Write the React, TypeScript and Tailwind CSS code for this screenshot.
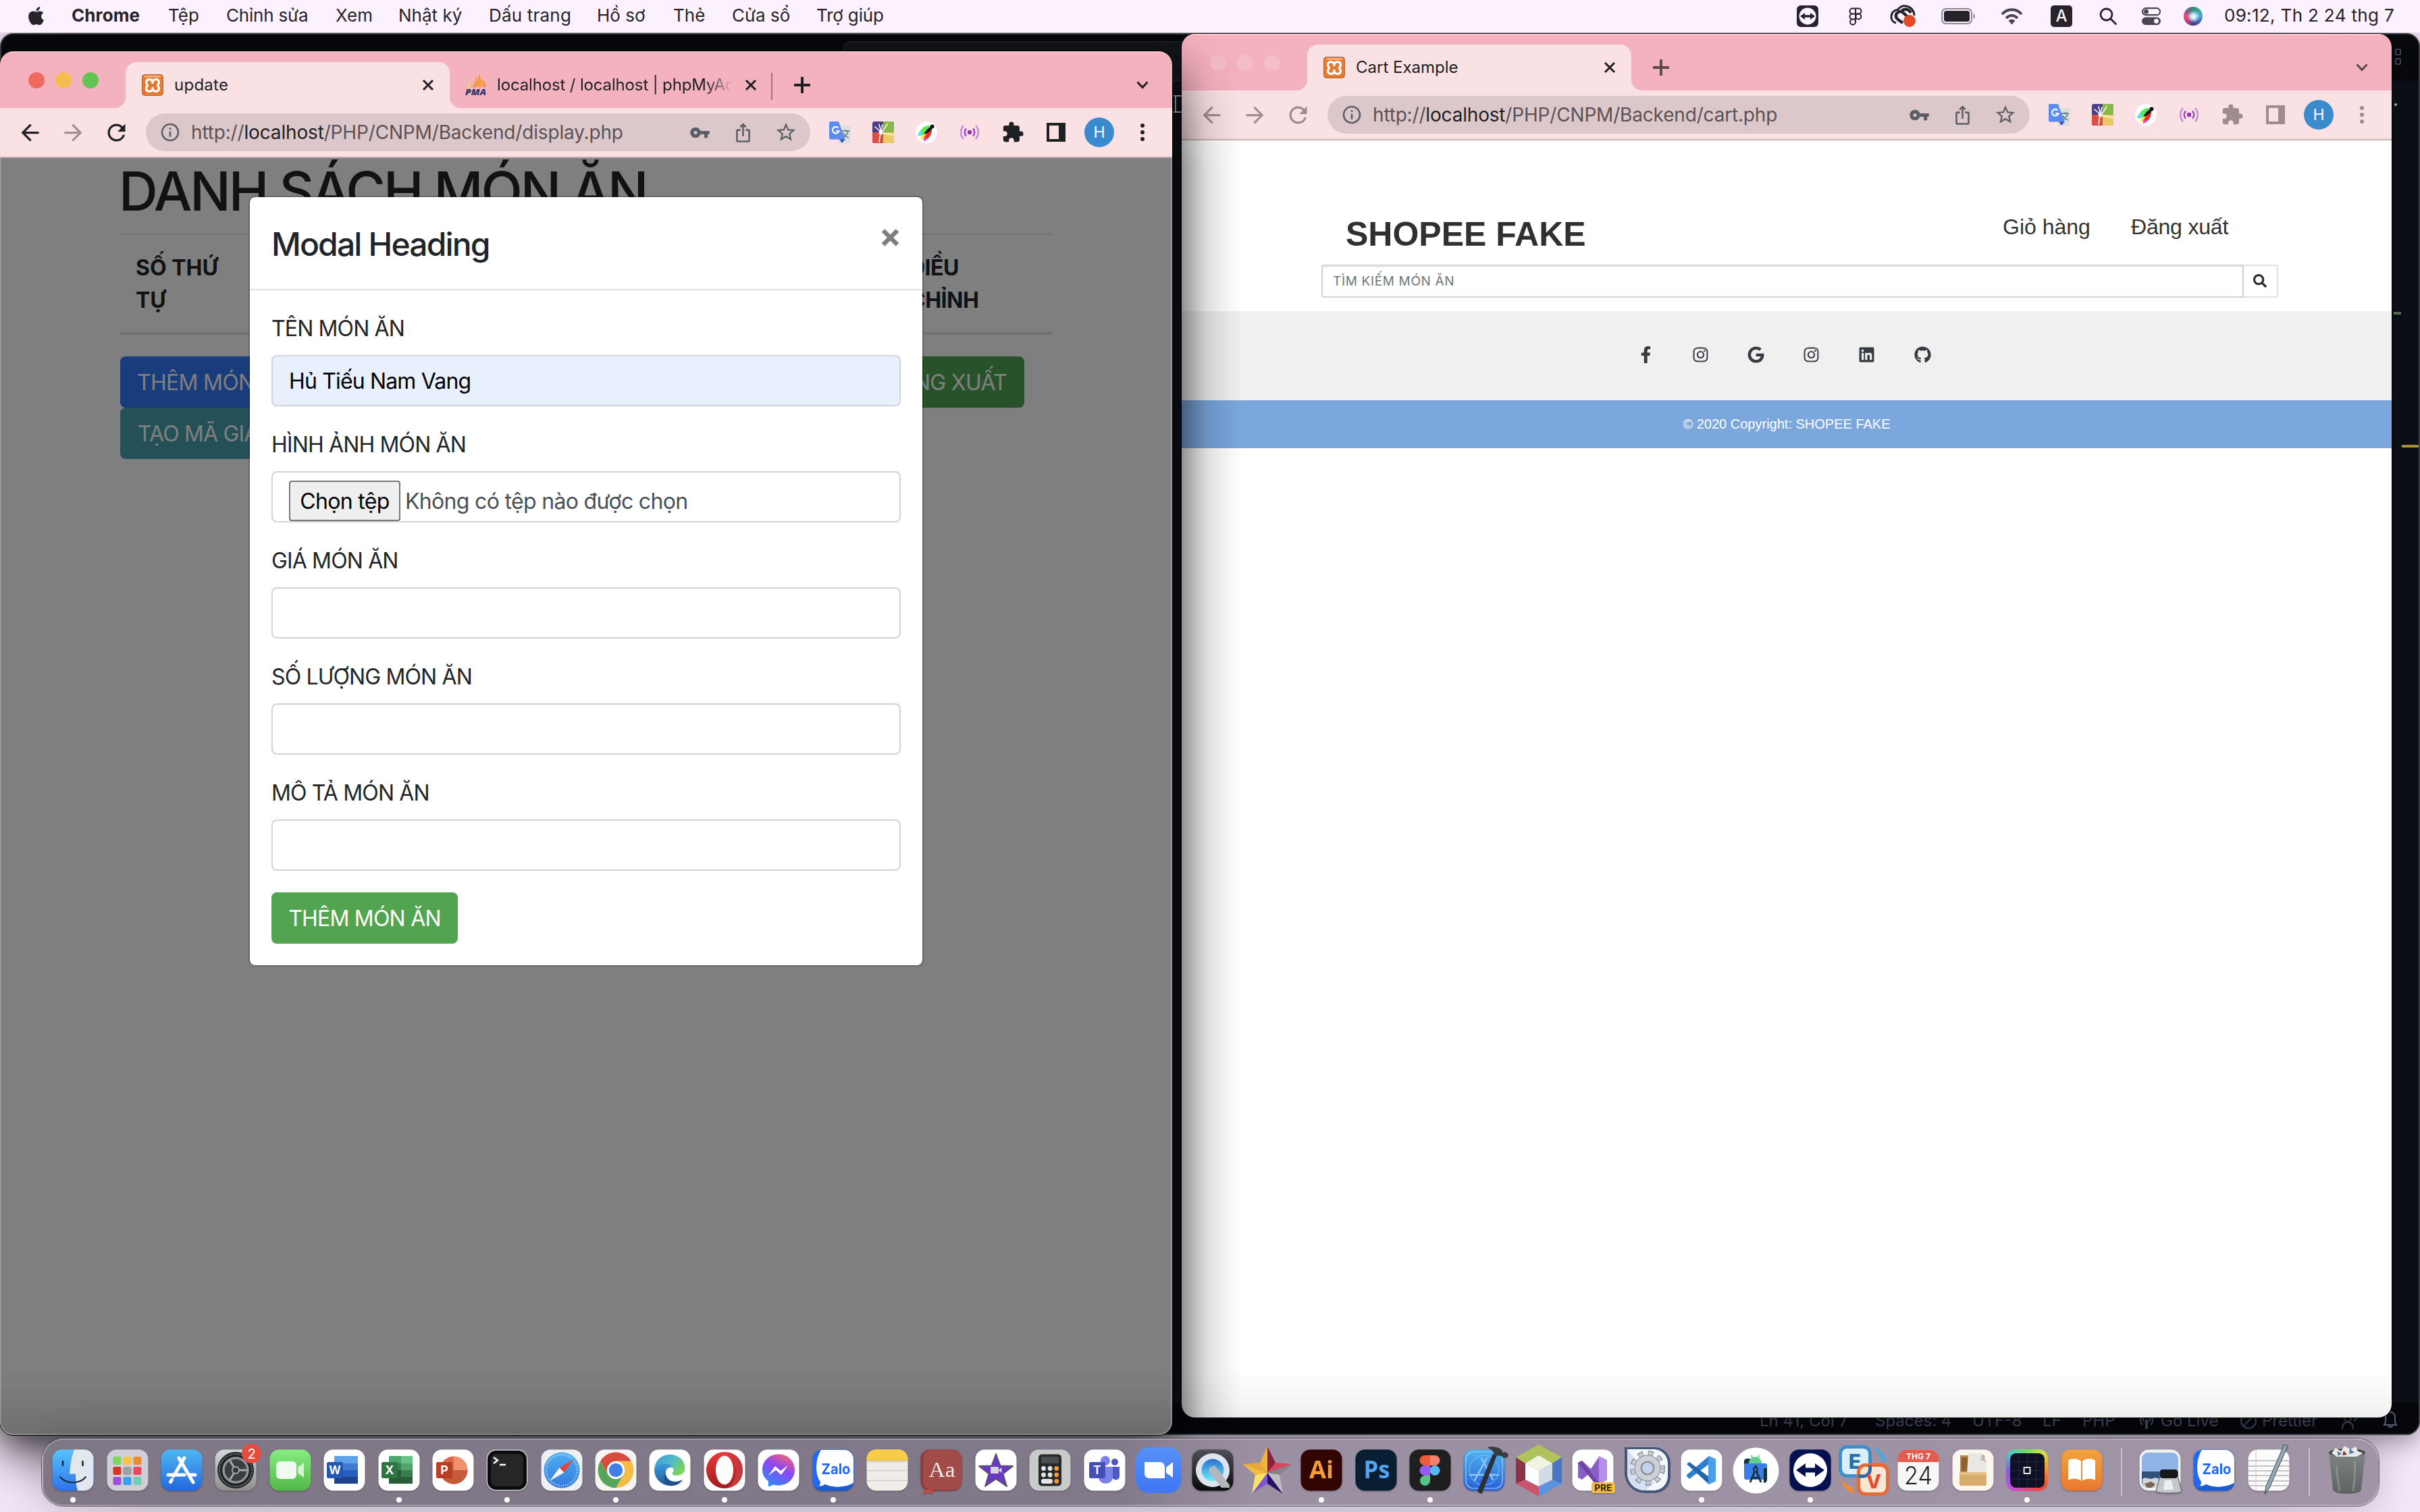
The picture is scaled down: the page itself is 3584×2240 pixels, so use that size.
import React from "react";
import {
  MdArrowBack,
  MdArrowForward,
  MdRefresh,
  MdVpnKey,
  MdIosShare,
  MdStarBorder,
  MdExtension,
  MdInfoOutline,
} from "react-icons/md";
import {
  FaApple,
  FaFacebookF,
  FaInstagram,
  FaGoogle,
  FaLinkedin,
  FaGithub,
  FaSearch,
} from "react-icons/fa";

type Kids = { children?: React.ReactNode };

/* ------------------------------------------------------------------ */
/* Menu bar                                                            */
/* ------------------------------------------------------------------ */

const menus = [
  { label: "Chrome", cls: "w-[143px] font-bold tracking-[0.1px]" },
  { label: "Tệp", cls: "w-[86px]" },
  { label: "Chỉnh sửa", cls: "w-[162px] tracking-[-0.2px]" },
  { label: "Xem", cls: "w-[93px]" },
  { label: "Nhật ký", cls: "w-[134px]" },
  { label: "Dấu trang", cls: "w-[160px] tracking-[0.2px]" },
  { label: "Hồ sơ", cls: "w-[113px]" },
  { label: "Thẻ", cls: "w-[87px]" },
  { label: "Cửa sổ", cls: "w-[125px]" },
  { label: "Trợ giúp", cls: "w-[120px] tracking-[-0.16px]" },
];

function MenuBar() {
  return (
    <header className="absolute inset-x-0 top-0 z-50 flex h-[48px] items-center bg-[#fbf1ff] text-[26px] text-[#262329]">
      <FaApple className="mb-[2px] ml-[38px] size-[31px]" />
      <nav className="ml-[37px] flex pb-[3px] leading-[44px]">
        {menus.map((m) => (
          <span key={m.label} className={`whitespace-nowrap ${m.cls}`}>
            {m.label}
          </span>
        ))}
      </nav>
      <div className="ml-auto flex items-center">
        <svg className="mr-[45px] size-[32px]" viewBox="0 0 32 32">
          <rect width="32" height="32" rx="6" fill="#262329" />
          <circle cx="16" cy="16" r="12.500" fill="#fbf1ff" />
          <path d="M5 16l7-5v3.200h8V11l7 5-7 5v-3.200h-8V21z" fill="#262329" />
        </svg>
        <svg className="mr-[39px] h-[27px] w-[20px]" viewBox="0 0 20 27" fill="none" stroke="#262329" strokeWidth="2">
          <path d="M10 1.500H5.500a4 4 0 0 0 0 8H10zM10 1.500h4.500a4 4 0 0 1 0 8H10zM10 9.500H5.500a4 4 0 0 0 0 8H10zM10 17.500H5.500a4 4 0 1 0 4.500 4z" />
          <circle cx="14.300" cy="13.500" r="4" />
        </svg>
        <svg className="mr-[36px] h-[34px] w-[42px]" viewBox="0 0 42 34">
          <path d="M11 27a9 9 0 0 1-7-9c0-6 4-10 10-11 3-4 7-6 12-5 7 1 12 7 12 14" fill="none" stroke="#262329" strokeWidth="3" />
          <path d="M21 27l-7-5c-4-3-4-8-1-10 3-3 7-2 10 1l5 5M19 10c4-5 11-4 14 2" fill="none" stroke="#262329" strokeWidth="4.500" />
          <circle cx="31" cy="24" r="9" fill="#de4b26" />
        </svg>
        <svg className="mr-[37px] h-[24px] w-[51px]" viewBox="0 0 51 24">
          <rect x="1" y="1" width="44" height="22" rx="6" fill="none" stroke="#8f8894" strokeWidth="2" />
          <rect x="4" y="4" width="38" height="16" rx="3.500" fill="#262329" />
          <path d="M47.500 8v8c3-1 3-7 0-8z" fill="#8f8894" />
        </svg>
        <svg className="mr-[41px] h-[25px] w-[33px]" viewBox="0 0 33 25" fill="none" stroke="#4a464d" strokeWidth="4">
          <path d="M2 9c8-9 21-9 29 0M8 15c5-5.500 12-5.500 17 0" />
          <path d="M16.500 24.500l-5-6c3-2.500 7-2.500 10 0z" fill="#4a464d" stroke="none" />
        </svg>
        <span className="mr-[40px] flex size-[32px] items-center justify-center rounded-[5px] bg-[#262329] text-[24px] font-medium text-[#fbf1ff]">
          A
        </span>
        <svg className="mr-[37px] size-[26px]" viewBox="0 0 26 26" fill="none" stroke="#262329" strokeWidth="2.800">
          <circle cx="10.500" cy="10.500" r="8.500" />
          <path d="M17 17l7.500 7.500" strokeLinecap="round" />
        </svg>
        <svg className="mr-[34px] h-[26px] w-[28px]" viewBox="0 0 28 26">
          <rect x="1" y="1.200" width="26" height="10" rx="5" fill="none" stroke="#4a464d" strokeWidth="2.200" />
          <circle cx="6.500" cy="6.200" r="3.400" fill="#4a464d" />
          <rect y="14.500" width="28" height="11.500" rx="5.700" fill="#4a464d" />
          <circle cx="21.500" cy="20.200" r="3.500" fill="#fbf1ff" />
        </svg>
        <span className="mr-[32px] size-[28px] rounded-full bg-[radial-gradient(circle_at_52%_52%,#ffffff_0%,#c5e4f5_18%,transparent_45%),conic-gradient(from_0deg,#2f8f77,#3ea79a,#4fa6dc,#3c62b8,#463a86,#b4407c,#e04f80,#7c5f8a,#2f8f77)]" />
        <span className="mr-[38px] whitespace-nowrap pb-[3px] leading-[44px] tracking-[0.34px]">
          09:12, Th 2 24 thg 7
        </span>
      </div>
    </header>
  );
}

/* ------------------------------------------------------------------ */
/* Browser chrome                                                      */
/* ------------------------------------------------------------------ */

function XamppIcon() {
  return (
    <svg className="size-[32px] shrink-0" viewBox="0 0 32 32">
      <rect x="0.500" y="0.500" width="31" height="31" rx="4" fill="#e57b33" stroke="#b3632c" />
      <rect x="4" y="2" width="24" height="2.500" rx="1" fill="#f3b78a" />
      <path
        d="M16 12.500c0-6.500-9.500-6.500-9.500-.5 0 2.500 1.800 3 1.800 4.500s-1.800 2-1.800 4.500c0 6 9.500 6 9.500-.5 0 6.500 9.500 6.500 9.500.5 0-2.500-1.800-3-1.800-4.500s1.800-2 1.800-4.500c0-6-9.500-6-9.500.5z"
        fill="none"
        stroke="#fff"
        strokeWidth="3.300"
        strokeLinejoin="round"
      />
    </svg>
  );
}

function PmaIcon() {
  return (
    <svg className="size-[32px] shrink-0" viewBox="0 0 32 32">
      <path d="M8 3C8 10 5 17 2 21l7-1zM16 2c0 7-3 14-6 18l9-1zM20 0c4 5 5 13 4 19l-7 0zM25 7c4 4 6 8 6 12l-5 0z" fill="#f29a3d" />
      <path d="M8 3c1 6 1 12 0 17l-6 1C5 17 8 10 8 3z" fill="#f7c98f" />
      <text
        x="0"
        y="31"
        fontSize="13"
        fontWeight="800"
        fontStyle="italic"
        fontFamily="Open Sans, sans-serif"
        fill="#2c3766"
        textLength="31"
        lengthAdjust="spacingAndGlyphs"
      >
        PMA
      </text>
    </svg>
  );
}

function CloseX() {
  return (
    <svg className="size-[18px]" viewBox="0 0 18 18" stroke="#1f2023" strokeWidth="3">
      <path d="M2 2l14 14M16 2L2 16" />
    </svg>
  );
}

function ActiveTab({ children }: Kids) {
  return (
    <div className="relative flex h-[68px] w-[480px] items-center rounded-t-[16px] bg-[#f9e1e4] pl-[24px] pr-[23px]">
      <span className="absolute -left-[16px] bottom-0 size-[16px] bg-[radial-gradient(circle_at_0_0,transparent_15.5px,#f9e1e4_16.5px)]" />
      <span className="absolute -right-[16px] bottom-0 size-[16px] bg-[radial-gradient(circle_at_100%_0,transparent_15.5px,#f9e1e4_16.5px)]" />
      {children}
    </div>
  );
}

function Slot({ children }: Kids) {
  return <span className="flex w-[64px] items-center justify-center">{children}</span>;
}

function TranslateIcon() {
  return (
    <svg className="size-[32px]" viewBox="0 0 32 32">
      <rect x="13" y="6" width="19" height="26" rx="2" fill="#dcdee0" />
      <path d="M19 14h11M24.500 12v2M28 14c-1 5-4 8-8 10M21 17c1 3 4 6 8 7" stroke="#6c8790" strokeWidth="1.800" fill="none" />
      <path d="M15 26l4 6 5-6z" fill="#3b4fb0" />
      <path d="M2 0h12l9.500 26.500H2a2 2 0 0 1-2-2V2a2 2 0 0 1 2-2z" fill="#5b8def" />
      <path d="M13.500 9.500a4.800 4.800 0 1 0 1 4.500H10" fill="none" stroke="#fff" strokeWidth="2.200" />
    </svg>
  );
}

function SplashIcon() {
  return (
    <svg className="size-[32px]" viewBox="0 0 32 32">
      <rect width="32" height="32" rx="3" fill="#4a3f86" />
      <path d="M16 0h13a3 3 0 0 1 3 3v13H16z" fill="#86b84a" />
      <path d="M0 16h16v16H3a3 3 0 0 1-3-3z" fill="#dc4f45" />
      <path d="M16 16h16v13a3 3 0 0 1-3 3H16z" fill="#ecc866" />
      <path d="M13 16L4 8M13 16L10 4M13 16l2-11M14 16l8-12M13 17l18 3M12 17l-2 13" stroke="#fff" strokeWidth="1.600" strokeLinecap="round" />
      <circle cx="12.500" cy="16.500" r="3" fill="#fff" />
    </svg>
  );
}

function FeatherIcon() {
  return (
    <svg className="size-[32px]" viewBox="0 0 32 32">
      <circle cx="16" cy="16" r="16" fill="#fff" />
      <path d="M3 21c3-8 9-15 17-15l3 3C20 16 12 22 3 21z" fill="#56e858" />
      <path d="M3 21c1-3 3-6 5-8l3 6c-2 2-5 2-8 2z" fill="#4fe3e8" />
      <path d="M8 26c1-5 4-9 8-12l2 6c-2 4-6 7-10 6z" fill="#f1e33a" />
      <path d="M12 29c-1-6 6-14 12-18 1 7-4 15-12 18z" fill="#ee2f24" />
      <path d="M12 29c0-2 1-4 2-5l4 1c-1 2-3 3-6 4z" fill="#ef3fe0" />
      <path d="M12 19c3-6 7-10 12-12l1 3c-3 4-7 8-13 9z" fill="#111" />
      <circle cx="24.500" cy="7.500" r="3" fill="#111" />
    </svg>
  );
}

function SignalIcon() {
  return (
    <svg className="h-[24px] w-[28px]" viewBox="0 0 28 24" fill="none">
      <circle cx="14" cy="12" r="3.200" fill="#8d35b3" />
      <path d="M9 6.500c-3 3-3 8 0 11M19 6.500c3 3 3 8 0 11" stroke="#9a48be" strokeWidth="2.600" />
      <path d="M5 2c-5 5.500-5 14.500 0 20M23 2c5 5.500 5 14.500 0 20" stroke="#c48fd9" strokeWidth="2.600" />
    </svg>
  );
}

type BrowserProps = {
  inactive?: boolean;
  tabTitle: string;
  tabTitleCls: string;
  extraTab?: boolean;
  path: string;
  urlCls: string;
  frame: string;
  children?: React.ReactNode;
};

function BrowserWindow({ inactive, tabTitle, tabTitleCls, extraTab, path, urlCls, frame, children }: BrowserProps) {
  const ink = inactive ? "text-[#5b4a4e]" : "text-[#1f2023]";
  const tool = inactive ? "text-[#9f8c91]" : "text-[#1f2023]";
  return (
    <section className={`absolute flex flex-col overflow-hidden rounded-[20px] ${frame}`}>
      <div className="flex h-[84px] shrink-0 items-end border-t-2 border-[#f8c8d1] bg-[#f4b1be]">
        <div className="ml-[42px] flex h-full items-center gap-[16px]">
          <span className={`size-[24px] rounded-full ${inactive ? "bg-[#f5bdc8]" : "bg-[#ee6a5e]"}`} />
          <span className={`size-[24px] rounded-full ${inactive ? "bg-[#f5bdc8]" : "bg-[#f5bd4f]"}`} />
          <span className={`size-[24px] rounded-full ${inactive ? "bg-[#f5bdc8]" : "bg-[#61c554]"}`} />
        </div>
        <div className="ml-[40px]">
          <ActiveTab>
            <XamppIcon />
            <span className={`ml-[16px] flex-1 text-[24px] text-[#1f2023] ${tabTitleCls}`}>{tabTitle}</span>
            <CloseX />
          </ActiveTab>
        </div>
        {extraTab && (
          <div className="flex h-[68px] w-[476px] items-center pl-[23px] pr-[21px]">
            <PmaIcon />
            <span className="ml-[15px] w-[352px] overflow-hidden whitespace-nowrap text-[24px] tracking-[-0.15px] text-[#1f2023] [mask-image:linear-gradient(to_right,#000_88%,transparent_99%)]">
              localhost / localhost | phpMyAdmin
            </span>
            <span className="ml-auto flex">
              <CloseX />
            </span>
          </div>
        )}
        <div className="flex h-[68px] flex-1 items-center justify-between pr-[35px]">
          <div className="flex items-center">
            {extraTab ? <span className="mt-[3px] h-[40px] w-[2px] bg-[#a5707c]" /> : null}
            <svg className={`ml-[32px] size-[24px] ${ink}`} viewBox="0 0 24 24" stroke="currentColor" strokeWidth="4">
              <path d="M12 0v24M0 12h24" />
            </svg>
          </div>
          <svg className={`h-[12px] w-[18px] ${ink}`} viewBox="0 0 18 12" fill="none" stroke="currentColor" strokeWidth="3">
            <path d="M1.500 1.500L9 9.500l7.500-8" />
          </svg>
        </div>
      </div>
      <div className="flex h-[74px] shrink-0 items-center border-b-2 border-[#c9b3b8] bg-[#f9e1e4] px-[12px]">
        <div className={`flex ${tool}`}>
          <Slot>
            <MdArrowBack className="size-[39px]" />
          </Slot>
          <Slot>
            <MdArrowForward className="size-[39px] text-[#a08f93]" />
          </Slot>
          <Slot>
            <MdRefresh className="size-[39px]" />
          </Slot>
        </div>
        <div className="ml-[12px] flex h-[56px] flex-1 items-center rounded-full bg-[#dcc8ca] pl-[20px] pr-[4px] text-[#5b5f65]">
          <MdInfoOutline className="size-[32px]" />
          <span className={`ml-[15px] flex-1 whitespace-nowrap text-[28px] leading-[40px] text-[#5c5154] ${urlCls}`}>
            http://<span className="text-[#1f2023]">localhost</span>
            {path}
          </span>
          <Slot>
            <MdVpnKey className="size-[31px]" />
          </Slot>
          <Slot>
            <MdIosShare className="size-[31px]" />
          </Slot>
          <Slot>
            <MdStarBorder className="size-[34px]" />
          </Slot>
        </div>
        <div className={`ml-[12px] flex ${tool}`}>
          <Slot>
            <TranslateIcon />
          </Slot>
          <Slot>
            <SplashIcon />
          </Slot>
          <Slot>
            <FeatherIcon />
          </Slot>
          <Slot>
            <SignalIcon />
          </Slot>
          <Slot>
            <MdExtension className="size-[34px]" />
          </Slot>
          <Slot>
            <span className="size-[28px] border-4 border-r-[10px] border-current" />
          </Slot>
          <Slot>
            <span className="flex size-[44px] items-center justify-center rounded-full bg-[#3a8bcd] text-[23px] text-white">H</span>
          </Slot>
          <Slot>
            <span className="flex flex-col gap-[4px]">
              <i className="size-[6px] rounded-full bg-current" />
              <i className="size-[6px] rounded-full bg-current" />
              <i className="size-[6px] rounded-full bg-current" />
            </span>
          </Slot>
        </div>
      </div>
      {children}
    </section>
  );
}

/* ------------------------------------------------------------------ */
/* Admin page with the modal                                           */
/* ------------------------------------------------------------------ */

function Field({ label, children }: { label: string; children?: React.ReactNode }) {
  return (
    <div className="mb-[32px]">
      <div className="mb-[15px] pt-px text-[32px] leading-[48px] tracking-[-0.86px] text-[#212529]">{label}</div>
      {children ?? <div className="h-[76px] rounded-[8px] border-2 border-[#ced4da] bg-white" />}
    </div>
  );
}

function Modal() {
  return (
    <div className="absolute left-[368px] top-[56px] w-[1000px] rounded-[10px] border-2 border-black/20 bg-white bg-clip-padding">
      <div className="flex items-start justify-between border-b-2 border-[#dee2e6] p-[32px]">
        <h4 className="-mb-[2px] mt-[2px] text-[48px] font-medium leading-[72px] tracking-[-1.85px] text-[#212529]">
          Modal Heading
        </h4>
        <svg className="mr-[2px] mt-[15px] h-[26px] w-[27px]" viewBox="0 0 26 26" stroke="#7f7f7f" strokeWidth="6.500">
          <path d="M2.500 2.500l21 21M23.500 2.500l-21 21" />
        </svg>
      </div>
      <div className="p-[32px]">
        <Field label="TÊN MÓN ĂN">
          <div className="h-[76px] rounded-[8px] border-2 border-[#ced4da] bg-[#e8effd] px-[24px] text-[32px] leading-[74px] tracking-[-0.84px] text-black">
            Hủ Tiếu Nam Vang
          </div>
        </Field>
        <Field label="HÌNH ẢNH MÓN ĂN">
          <div className="flex h-[76px] items-end rounded-[8px] border-2 border-[#ced4da] px-[24px] text-[32px] tracking-[-0.68px]">
            <span className="flex h-[60px] w-[165px] items-center justify-center whitespace-nowrap rounded-[4px] border-2 border-[#767676] bg-[#efefef] pt-px text-black">
              Chọn tệp
            </span>
            <span className="ml-[7px] whitespace-nowrap leading-[59px] text-[#495057]">Không có tệp nào được chọn</span>
          </div>
        </Field>
        <Field label="GIÁ MÓN ĂN" />
        <Field label="SỐ LƯỢNG MÓN ĂN" />
        <Field label="MÔ TẢ MÓN ĂN" />
        <div className="flex h-[76px] w-[276px] items-center justify-center whitespace-nowrap rounded-[8px] bg-[#53a451] pt-[2px] text-[32px] tracking-[-0.8px] text-white">
          THÊM MÓN ĂN
        </div>
      </div>
    </div>
  );
}

function AdminPage() {
  return (
    <div className="relative flex-1 overflow-hidden bg-white">
      <div className="ml-[178px] w-[1380px] text-[#212529]">
        <h1 className="-ml-[2px] mb-[16px] whitespace-nowrap pt-[2px] text-[80px] font-medium leading-[94px] tracking-[-3.1px]">
          DANH SÁCH MÓN ĂN
        </h1>
        <div className="mb-[32px] flex justify-between border-b-4 border-t-2 border-[#dee2e6] pb-[23px] pt-[25px] text-[32px] font-bold leading-[48px]">
          <div className="w-[168px] pl-[23px]">
            SỐ THỨ
            <br />
            TỰ
          </div>
          <div className="w-[211px] tracking-[-0.500px]">
            ĐIỀU
            <br />
            CHỈNH
          </div>
        </div>
        <div className="flex text-[32px] leading-[76px] tracking-[-0.71px] text-white">
          <span className="h-[76px] w-[276px] whitespace-nowrap rounded-[8px] bg-[#3078f8] pl-[25px] pt-px">THÊM MÓN ĂN</span>
          <span className="ml-auto mr-[41px] h-[76px] whitespace-nowrap rounded-[8px] bg-[#50a654] px-[26px] pt-px">ĐĂNG XUẤT</span>
        </div>
        <div className="h-[76px] w-[320px] whitespace-nowrap rounded-[8px] bg-[#48a2ae] pl-[26px] pt-px text-[32px] leading-[76px] tracking-[-0.85px] text-white">
          TẠO MÃ GIẢM GIÁ
        </div>
      </div>
      <div className="absolute inset-0 bg-black/50" />
      <div className="absolute inset-x-0 bottom-0 h-[100px] bg-gradient-to-b from-transparent to-black/12" />
      <div className="absolute inset-0 rounded-b-[20px] border-2 border-t-0 border-white/20" />
      <Modal />
    </div>
  );
}

/* ------------------------------------------------------------------ */
/* Shop page                                                           */
/* ------------------------------------------------------------------ */

const socials = [
  { Icon: FaFacebookF, cls: "pl-[4px]" },
  { Icon: FaInstagram, cls: "" },
  { Icon: FaGoogle, cls: "" },
  { Icon: FaInstagram, cls: "" },
  { Icon: FaLinkedin, cls: "" },
  { Icon: FaGithub, cls: "" },
];

function ShopPage() {
  return (
    <div className="flex flex-1 flex-col bg-white font-['Liberation_Sans',sans-serif]">
      <div className="flex h-[184px] items-start pt-[108px] text-[#333]">
        <div className="ml-[243px] mt-px w-[973px] whitespace-nowrap text-[50px] font-bold leading-[60px] text-[#303030]">
          SHOPEE FAKE
        </div>
        <div className="w-[190px] whitespace-nowrap text-[32px] leading-[40px]">Giỏ hàng</div>
        <div className="whitespace-nowrap text-[32px] leading-[40px] tracking-[-0.2px]">Đăng xuất</div>
      </div>
      <div className="ml-[207px] flex h-[49px] w-[1417px]">
        <div className="flex-1 rounded-l-[4px] border-2 border-[#ced4da] pl-[15px] font-[Inter] text-[19px] leading-[46px] tracking-[0.66px] text-[#6c757d] shadow-[inset_0_2px_2px_rgba(0,0,0,0.08)]">
          TÌM KIẾM MÓN ĂN
        </div>
        <div className="flex w-[51px] items-center justify-center rounded-r-[4px] border-2 border-l-0 border-[#dee2e6]">
          <FaSearch className="mb-[2px] mr-[2px] size-[20px] text-[#292b2c]" />
        </div>
      </div>
      <div className="mt-[20px] flex h-[132px] items-center justify-center bg-[#f0f0f0] pb-[3px] pr-[9px] text-[#343a40]">
        {socials.map(({ Icon, cls }, i) => (
          <span key={i} className={`flex w-[82.3px] justify-center ${cls}`}>
            <Icon className="size-[25px]" />
          </span>
        ))}
      </div>
      <div className="h-[71px] bg-[#7ba7dd] text-center text-[20px] leading-[70px] text-white">© 2020 Copyright: SHOPEE FAKE</div>
    </div>
  );
}

/* ------------------------------------------------------------------ */
/* Editor window behind the browsers                                   */
/* ------------------------------------------------------------------ */

function EditorWindow() {
  return (
    <section className="absolute left-0 top-[49px] flex h-[2077px] w-[3584px] flex-col overflow-hidden rounded-[20px] border-2 border-[#3c3e42] bg-[#07080c] shadow-[0_10px_40px_rgba(0,0,0,0.4)]">
      <div className="flex h-[69px] shrink-0 items-start">
        <div className="ml-[1247px] mt-[10px] h-[59px] w-[600px] rounded-[10px] border-2 border-[#1d2028] bg-[#111317]" />
        <div className="ml-auto mr-[26px] mt-[21px] flex flex-col gap-[4px]">
          <i className="h-[10px] w-[9px] rounded-[2px] border-2 border-[#3b3f55]" />
          <i className="h-[10px] w-[9px] rounded-[2px] border-2 border-[#3b3f55]" />
        </div>
      </div>
      <div className="flex flex-1 flex-col items-end bg-[#0b0e14]">
        <i className="mr-[32px] mt-[33px] size-[4px] rounded-full bg-[#a8abb5]" />
        <i className="mr-[26px] mt-[305px] h-[4px] w-[11px] bg-[#56694f]" />
        <i className="mt-[193px] h-[4px] w-[25px] bg-[#a98f33]" />
      </div>
      <div className="flex h-[46px] shrink-0 items-center bg-[#05060a] pl-[2604px] pt-[7px] text-[24px] text-[#3a3c50]">
        <span className="w-[171px] whitespace-nowrap">Ln 41, Col 7</span>
        <span className="w-[144px] whitespace-nowrap">Spaces: 4</span>
        <span className="w-[104px] whitespace-nowrap">UTF-8</span>
        <span className="w-[59px] whitespace-nowrap">LF</span>
        <span className="w-[84px] whitespace-nowrap">PHP</span>
        <svg className="h-[28px] w-[22px]" viewBox="0 0 22 28" fill="none" stroke="currentColor" strokeWidth="2">
          <path d="M5 20a9 9 0 1 1 12 0M7.500 15a5 5 0 1 1 7 0" />
          <path d="M11 12v14" strokeWidth="4" />
        </svg>
        <span className="ml-[10px] w-[118px] whitespace-nowrap">Go Live</span>
        <svg className="size-[24px]" viewBox="0 0 24 24" fill="none" stroke="currentColor" strokeWidth="2">
          <circle cx="12" cy="12" r="11" />
          <path d="M20 4L4 20" />
        </svg>
        <span className="ml-[8px] w-[118px] whitespace-nowrap">Prettier</span>
        <svg className="h-[26px] w-[24px]" viewBox="0 0 24 26" fill="none" stroke="currentColor" strokeWidth="2">
          <circle cx="9" cy="9" r="5" />
          <path d="M1 25c0-7 3-10 8-10s8 3 8 10M13 3h10v6l-5 4" />
        </svg>
        <svg className="mb-[4px] ml-[37px] h-[26px] w-[22px]" viewBox="0 0 22 26" fill="none" stroke="#565973" strokeWidth="2">
          <path d="M2 21h18l-2-4V9a7 7 0 0 0-14 0v8zM8 22c0 3 6 3 6 0" />
        </svg>
      </div>
    </section>
  );
}

/* ------------------------------------------------------------------ */
/* Dock                                                                */
/* ------------------------------------------------------------------ */

function Tile({ fill, children }: { fill: string; children?: React.ReactNode }) {
  return (
    <svg className="size-[62px] shrink-0 overflow-visible drop-shadow-[0_1px_1px_rgba(0,0,0,0.3)]" viewBox="0 0 62 62">
      <rect x="0.500" y="0.500" width="61" height="61" rx="14" fill={fill} />
      {children}
    </svg>
  );
}

function Grad({ id, a, b }: { id: string; a: string; b: string }) {
  return (
    <linearGradient id={id} x1="0" y1="0" x2="0" y2="1">
      <stop offset="0" stopColor={a} />
      <stop offset="1" stopColor={b} />
    </linearGradient>
  );
}

function Finder() {
  return (
    <Tile fill="url(#finder)">
      <Grad id="finder" a="#56c3fa" b="#2e73ea" />
      <path d="M33 .5h14.500a14 14 0 0 1 14 14v33a14 14 0 0 1-14 14H38c-2-7-3-15-3-25h-9C27 24 29 10 33 .5z" fill="#e3e7ee" />
      <path d="M16 18v6M45.500 18v6" stroke="#1c2b3c" strokeWidth="2.600" strokeLinecap="round" />
      <path d="M12 41c9 11 29 11 38 0" fill="none" stroke="#1c2b3c" strokeWidth="2" strokeLinecap="round" />
    </Tile>
  );
}

function Launchpad() {
  const c = ["#7cd862", "#f7c543", "#ea8c30", "#d0382b", "#9aa0a3", "#ea4766", "#9c52d5", "#38a0f0", "#6fd0b4"];
  return (
    <Tile fill="#d1cfd6">
      {c.map((f, i) => (
        <rect key={i} x={9.5 + (i % 3) * 15} y={11 + Math.floor(i / 3) * 15} width="12" height="12" rx="2.500" fill={f} />
      ))}
    </Tile>
  );
}

function AppStore() {
  return (
    <Tile fill="url(#appstore)">
      <Grad id="appstore" a="#4db8f3" b="#2566dd" />
      <path d="M27 13l21 36M35 13L19 40M16.500 45L14.500 48.500M11 38h24M43 38h8" stroke="#fff" strokeWidth="5" strokeLinecap="round" />
    </Tile>
  );
}

function Settings() {
  return (
    <Tile fill="url(#settings)">
      <Grad id="settings" a="#cfd9dd" b="#8f8f8a" />
      <circle cx="31" cy="31" r="27" fill="#1d1f21" />
      <circle cx="31" cy="31" r="24" fill="none" stroke="#8d9193" strokeWidth="2" strokeDasharray="1.500 1.500" />
      <circle cx="31" cy="31" r="18" fill="#3b3e41" stroke="#909496" strokeWidth="3.500" />
      <path d="M31 31h17M31 31L22 16M31 31l-9 15" stroke="#a5a9ab" strokeWidth="3" />
      <circle cx="31" cy="31" r="5" fill="#34373a" stroke="#a5a9ab" strokeWidth="2" />
    </Tile>
  );
}

function FaceTime() {
  return (
    <Tile fill="url(#facetime)">
      <Grad id="facetime" a="#86ee81" b="#52b948" />
      <rect x="10" y="18" width="30" height="26" rx="6" fill="#f1faf0" />
      <path d="M42 27l9-7v22l-9-7z" fill="#d8f2d4" />
    </Tile>
  );
}

function Word() {
  return (
    <Tile fill="#fff">
      <path d="M16 10h35v11H16z" fill="#5ea2e8" />
      <path d="M16 21h35v10H16z" fill="#3f7bd1" />
      <path d="M16 31h35v10H16z" fill="#2a5cbb" />
      <path d="M16 41h35v10H16z" fill="#1f4189" />
      <rect x="5" y="19" width="24" height="24" rx="2.500" fill="#2456b4" />
      <text x="17" y="37" textAnchor="middle" fontSize="17" fontWeight="700" fill="#fff">W</text>
    </Tile>
  );
}

function Excel() {
  return (
    <Tile fill="#fff">
      <path d="M16 10h18v11H16z" fill="#4ea46c" />
      <path d="M34 10h17v11H34z" fill="#66c48a" />
      <path d="M16 21h18v10H16z" fill="#3a7f50" />
      <path d="M34 21h17v10H34z" fill="#4fa56c" />
      <path d="M16 31h18v20H16z" fill="#2c5b3a" />
      <path d="M34 31h17v10H34z" fill="#397d4f" />
      <path d="M34 41h17v10H34z" fill="#2c5b3a" />
      <rect x="5" y="19" width="24" height="24" rx="2.500" fill="#2f7540" />
      <text x="17" y="37" textAnchor="middle" fontSize="18" fontWeight="700" fill="#fff">X</text>
    </Tile>
  );
}

function PowerPoint() {
  return (
    <Tile fill="#fff">
      <circle cx="32" cy="31" r="20.500" fill="#de6a47" />
      <path d="M32 10.500A20.500 20.500 0 0 1 52.500 31H32z" fill="#f0906f" />
      <path d="M52.500 31a20.500 20.500 0 0 1-41 0z" fill="#c55a3a" />
      <rect x="6" y="19" width="24" height="24" rx="2.500" fill="#b83f24" />
      <text x="18" y="37" textAnchor="middle" fontSize="18" fontWeight="700" fill="#fff">P</text>
    </Tile>
  );
}

function Terminal() {
  return (
    <Tile fill="#c9d2d8">
      <rect x="2" y="2" width="58" height="58" rx="12.500" fill="#0b0b0b" />
      <rect x="7" y="7" width="48" height="48" rx="8" fill="#262626" />
      <path d="M11 12l6 4.500-6 4.500M20 23h9" fill="none" stroke="#fff" strokeWidth="2.400" />
    </Tile>
  );
}

function Safari() {
  return (
    <Tile fill="#eef0f2">
      <circle cx="31" cy="31" r="26.500" fill="url(#safari)" />
      <Grad id="safari" a="#4fb0f2" b="#3478dd" />
      <circle cx="31" cy="31" r="23" fill="none" stroke="#bcdcf7" strokeWidth="3" strokeDasharray="1 2" />
      <path d="M49 15L34.500 34.500 27.500 27.500z" fill="#e0473b" />
      <path d="M13 47l14.500-19.500 7 7z" fill="#f4f6f8" />
    </Tile>
  );
}

function Chrome() {
  return (
    <Tile fill="#f6f5f4">
      <g transform="translate(4.600 4.600) scale(1.100)">
        <path d="M3.200 12A24 24 0 0 1 44.800 12H24L13.600 30Z" fill="#d94b3c" />
        <path d="M44.800 12A24 24 0 0 1 24 48L34.400 30L24 12Z" fill="#f2bd42" />
        <path d="M24 48A24 24 0 0 1 3.200 12L13.600 30H34.400Z" fill="#57a55a" />
        <circle cx="24" cy="24" r="12" fill="#fff" />
        <circle cx="24" cy="24" r="9.300" fill="#427ee8" />
      </g>
    </Tile>
  );
}

function Edge() {
  return (
    <Tile fill="#fff">
      <defs>
        <linearGradient id="edge1" x1="0" y1="0" x2="1" y2="0.600">
          <stop offset="0.100" stopColor="#3f9fdc" />
          <stop offset="0.550" stopColor="#52b9c4" />
          <stop offset="1" stopColor="#79d65a" />
        </linearGradient>
        <Grad id="edge2" a="#3f9be0" b="#1f5795" />
      </defs>
      <path d="M8 30C9 16 19 8 31 8c14 0 23 10 22.500 20 0 7-6 11-12 11-4 0-7-1-7-3 0-1 2-2 2-5 0-5-5-9-12-9-8 0-14 4-16.500 8z" fill="url(#edge1)" />
      <path d="M8 30c2-6 8-9 15-9 6 0 11 3 13 7-5-3-11 0-11 7 0 8 7 14 16 13 3 0 7-2 9-3-4 6-11 9-18 9C19 54 8 44 8 30z" fill="url(#edge2)" />
      <path d="M25 35c-1 9 6 14 15 13 4 0 8-2 10-3-4 7-12 10-20 9-8-3-8-13-5-19z" fill="#1f4f8f" />
    </Tile>
  );
}

function Opera() {
  return (
    <Tile fill="#fff">
      <defs>
        <Grad id="opera" a="#ea3a3b" b="#a01c1d" />
      </defs>
      <ellipse cx="31" cy="31" rx="27" ry="27" fill="url(#opera)" />
      <path d="M34 4.500C50 6 58 18 58 31S50 56 34 57.500C44 53 48 42 48 31S44 9 34 4.500z" fill="#c8383a" />
      <ellipse cx="31" cy="31" rx="13" ry="21.500" fill="#fff" />
    </Tile>
  );
}

function Messenger() {
  return (
    <Tile fill="#fff">
      <defs>
        <linearGradient id="msg" x1="0.300" y1="1" x2="0.800" y2="0">
          <stop offset="0" stopColor="#2a8bfb" />
          <stop offset="0.550" stopColor="#8d46f6" />
          <stop offset="1" stopColor="#f9646f" />
        </linearGradient>
      </defs>
      <path d="M31 7.500c14 0 24 10 24 23s-10 23-24 23c-3 0-5 0-7-1l-8 3v-8C10 43 7 37 7 30.500c0-13 10-23 24-23z" fill="url(#msg)" />
      <path d="M16 39l10-14 8 7 11-8-10 14-8-7z" fill="#fff" />
    </Tile>
  );
}

function Zalo() {
  return (
    <Tile fill="#2168f6">
      <path d="M13 1h34.500A14 14 0 0 1 61 14.500V50c-14 8-33 7-42 2-3 2-6 3-9 2 2-2 2-4 2-6C4 38 4 15 13 1z" fill="#fff" />
      <path d="M19 52c9 5 28 6 42-2-1 7-7 11.500-13.500 11.500h-33A14 14 0 0 1 4 57c6 0 11-2 15-5z" fill="#1d5cd0" />
      <text x="35" y="37" textAnchor="middle" fontSize="22" fontWeight="700" fill="#2168f6" textLength="43" lengthAdjust="spacingAndGlyphs">
        Zalo
      </text>
    </Tile>
  );
}

function Notes() {
  return (
    <Tile fill="#efedea">
      <path d="M.5 16V14.500a14 14 0 0 1 14-14h33a14 14 0 0 1 14 14V16z" fill="#f8cc45" />
      <path d="M.5 16.800h61" stroke="#c9a030" strokeWidth="1" />
      <path d="M3 19h56" stroke="#bbb8b2" strokeWidth="1.500" strokeDasharray="1.500 1.500" />
      <path d="M1 31.500h60M1 46.500h60" stroke="#cfccc7" strokeWidth="1.500" />
    </Tile>
  );
}

function Dictionary() {
  return (
    <Tile fill="#8d3b39">
      <path d="M5 60h13v7l-6.500-4L5 67z" fill="#c64a40" />
      <rect x="4" y="1" width="57" height="59" rx="12" fill="#a24c49" />
      <text x="32" y="41" textAnchor="middle" fontSize="31" fontFamily="Liberation Serif, serif" fill="#f4ecea" textLength="39" lengthAdjust="spacingAndGlyphs">
        Aa
      </text>
    </Tile>
  );
}

function IMovie() {
  return (
    <Tile fill="#fff">
      <path d="M31 7l6.500 17.500L56 25 41.500 36.500 47 55 31 44 15 55l5.500-18.500L6 25l18.500-.5z" fill="#6a38c9" stroke="#5c5568" strokeWidth="2" strokeLinejoin="round" />
      <rect x="23" y="26" width="12" height="10" rx="1.500" fill="#d9d4e4" />
      <path d="M35.500 30l4-3v8l-4-3z" fill="#d9d4e4" />
    </Tile>
  );
}

function Calculator() {
  const keys = ["#e6e6e4", "#e6e6e4", "#f3973a"];
  return (
    <Tile fill="#c9cbca">
      <rect x="14" y="7.500" width="34" height="47" rx="5" fill="#26282a" />
      <rect x="18" y="11" width="26" height="10" rx="2" fill="#4b4e50" />
      {[0, 1, 2].map((r) =>
        keys.map((k, i) => <circle key={`${r}${i}`} cx={21.5 + i * 9.6} cy={28.5 + r * 9.5} r="3.400" fill={k} />),
      )}
      <rect x="18" y="44" width="17" height="7" rx="3.500" fill="#e6e6e4" />
    </Tile>
  );
}

function Teams() {
  return (
    <Tile fill="#fff">
      <circle cx="32" cy="17" r="7" fill="#7a83e8" />
      <circle cx="46" cy="19" r="5" fill="#4d57bd" />
      <path d="M42 26h11v14c0 7-11 7-11 0z" fill="#4f59c4" />
      <path d="M22 26h21v15c0 13-21 13-21 0z" fill="#7a83e8" />
      <rect x="8" y="19" width="24" height="24" rx="2.500" fill="#4550b3" />
      <text x="20" y="37" textAnchor="middle" fontSize="17" fontWeight="700" fill="#fff">T</text>
    </Tile>
  );
}

function Zoom() {
  return (
    <svg className="-mx-[3px] -my-[4px] size-[68px] shrink-0" viewBox="0 0 68 68">
      <rect width="68" height="68" rx="20" fill="url(#zoomg)" />
      <Grad id="zoomg" a="#5591f8" b="#3f76f4" />
      <path d="M13 22h23a7 7 0 0 1 7 7v17H20a7 7 0 0 1-7-7zM45 30l10-8v23l-10-7z" fill="#fff" />
    </svg>
  );
}

function QuickTime() {
  return (
    <Tile fill="url(#qt)">
      <Grad id="qt" a="#4e5054" b="#0a0a0b" />
      <circle cx="31" cy="31" r="25" fill="#dde4ee" />
      <circle cx="31" cy="31" r="16.500" fill="url(#qt2)" />
      <Grad id="qt2" a="#2b6fd0" b="#6df0ff" />
      <path d="M27 27l7-3 22 29v4H44L25 33z" fill="#b3b7bc" />
    </Tile>
  );
}

function StarUml() {
  return (
    <svg className="-mx-[6px] -my-[5px] h-[72px] w-[74px] shrink-0" viewBox="0 0 74 72">
      <path d="M37 1v39L26 25z" fill="#f2b53c" />
      <path d="M37 1v39l12-15z" fill="#8a2141" />
      <path d="M0 27l26-2 11 15z" fill="#e9a83a" />
      <path d="M0 27l19 16 18-3z" fill="#f4b93f" />
      <path d="M74 27l-25-2-12 15z" fill="#d9455f" />
      <path d="M74 27L55 43l-18-3z" fill="#84828b" />
      <path d="M37 40l18 3 5 28z" fill="#bdbdc2" />
      <path d="M37 40l23 31-23-15z" fill="#2a0d66" />
      <path d="M37 40v16L14 71z" fill="#7c56d9" />
      <path d="M37 40L14 71l5-28z" fill="#fbe267" />
    </svg>
  );
}

function Illustrator() {
  return (
    <Tile fill="#300504">
      <text x="31" y="43" textAnchor="middle" fontSize="36" fontWeight="700" fontFamily="Open Sans, sans-serif" fill="#f29b38" textLength="36" lengthAdjust="spacingAndGlyphs">
        Ai
      </text>
    </Tile>
  );
}

function Photoshop() {
  return (
    <Tile fill="#0a1e33">
      <text x="32" y="43" textAnchor="middle" fontSize="35" fontWeight="700" fontFamily="Open Sans, sans-serif" fill="#4da6f8" textLength="39" lengthAdjust="spacingAndGlyphs">
        Ps
      </text>
    </Tile>
  );
}

function Figma() {
  return (
    <Tile fill="#1f1f20">
      <path d="M23 9h8v15h-8a7.500 7.500 0 0 1 0-15z" fill="#ee5b38" />
      <path d="M31 9h7a7.500 7.500 0 0 1 0 15h-7z" fill="#f5806c" />
      <path d="M31 24v15h-8a7.500 7.500 0 0 1 0-15z" fill="#955bf5" />
      <circle cx="38" cy="31.500" r="7.500" fill="#57b6f7" />
      <path d="M31 39v7.500a7.500 7.500 0 1 1-8-7.500z" fill="#56c585" />
    </Tile>
  );
}

function Xcode() {
  return (
    <Tile fill="url(#xcode)">
      <Grad id="xcode" a="#4cb5f0" b="#2860d8" />
      <rect x="4" y="4" width="54" height="54" rx="11" fill="none" stroke="#9fd0f7" strokeWidth="1.200" />
      <circle cx="31" cy="31" r="22" fill="none" stroke="#8cc3f5" strokeWidth="1" />
      <path d="M27 13l17 32M35 13L17 46M10 38h42" stroke="#8fc4f6" strokeWidth="2.600" strokeLinecap="round" />
      <path d="M44 7l6 2-22 56q-4 1-7-3z" fill="#2d3036" />
      <path d="M36-3c8-2 15 0 20 3l3 5 4-1 4 4-2 4-5 1-4-3-9-1c-2-6-6-9-11-12z" fill="#3a3c40" />
    </Tile>
  );
}

function NetBeans() {
  return (
    <svg className="-mx-[3px] -my-[8px] h-[77px] w-[68px] shrink-0" viewBox="0 0 68 77">
      <path d="M34 0l34 19-14 9-20-12-20 12L0 19z" fill="#b0c25c" />
      <path d="M0 19l14 9v24L0 58z" fill="#8a3349" />
      <path d="M0 58l14-6 20 11v14z" fill="#c9546b" />
      <path d="M68 19l-14 9v24l14 6z" fill="#4874c2" />
      <path d="M68 58l-14-6-20 11v14z" fill="#5b93df" />
      <path d="M34 16l20 12-20 11-20-11z" fill="#f0f2e2" />
      <path d="M14 28l20 11v23L14 52z" fill="#fff" />
      <path d="M54 28L34 39v23l20-10z" fill="#d3dbe6" />
    </svg>
  );
}

function VisualStudio() {
  return (
    <Tile fill="#fff">
      <path d="M9 20l6-3 13 12L41 10v42L28 34 15 45l-6-3z" fill="#8a5fc5" />
      <path d="M9 20l6-3 26 34-6 1z" fill="#6d45a3" />
      <path d="M40 10l12 6v30l-12 6z" fill="#b68ced" />
      <rect x="29" y="49" width="35" height="16" rx="3" fill="#f4bb41" />
      <text x="46.500" y="61.500" textAnchor="middle" fontSize="13" fontWeight="700" fill="#211a08" textLength="26" lengthAdjust="spacingAndGlyphs">
        PRE
      </text>
    </Tile>
  );
}

function GearPlate() {
  return (
    <svg className="-mx-[4px] -my-[3px] size-[70px] shrink-0" viewBox="0 0 70 70">
      <path d="M1 1h43c15 0 25 10 25 25v18c0 15-10 25-25 25H32C14 69 1 56 1 38z" fill="#44587a" />
      <path d="M5 4h38c13 0 22 9 22 22v17c0 13-9 22-22 22H32C16 65 5 54 5 38z" fill="#f4f7fc" />
      <path d="M5 4l40 50-13 11C16 65 5 54 5 38z" fill="#d6e0f2" />
      <circle cx="35" cy="32" r="22" fill="none" stroke="#8b8f98" strokeWidth="8" strokeDasharray="7.700 7.120" />
      <circle cx="35" cy="32" r="22" fill="none" stroke="#c9ccd3" strokeWidth="5" strokeDasharray="5.700 9.120" strokeDashoffset="-1" />
      <circle cx="35" cy="32" r="14.500" fill="none" stroke="#8b8f98" strokeWidth="10" />
      <circle cx="35" cy="32" r="14.500" fill="none" stroke="#cdd0d6" strokeWidth="8" />
      <circle cx="35" cy="32" r="9" fill="#c3d3ee" stroke="#858a94" strokeWidth="1.500" />
    </svg>
  );
}

function VsCode() {
  return (
    <Tile fill="#fff">
      <path d="M9 40l4 4 29-22V10L9 38z" fill="#2f7fd0" />
      <path d="M9 22l4-3 29 22v11z" fill="#2566a8" />
      <path d="M41 9.500l11 5v33l-11 5z" fill="#4a9ee8" />
    </Tile>
  );
}

function AndroidStudio() {
  return (
    <svg className="-mx-[4px] -my-[3px] size-[69px] shrink-0" viewBox="0 0 69 69">
      <circle cx="34.500" cy="34.500" r="34" fill="#fff" />
      <path d="M17 21a4 4 0 0 1 4-4h6v10H17z" fill="#143140" />
      <rect x="17" y="24" width="34" height="24" rx="3" fill="#3d7de6" />
      <path d="M24 24c0-13 19-13 19 0z" fill="#5fce8b" />
      <path d="M27 12l3 4M40 12l-3 4" stroke="#5fce8b" strokeWidth="1.500" />
      <path d="M46 31h5v18q-1 4-5 4z" fill="#143140" />
      <path d="M34 27v5M33 35l-7 17M35 35l7 17M29 44c3 2 7 2 10 0" fill="none" stroke="#143140" strokeWidth="3" />
      <circle cx="34" cy="33" r="3" fill="#3d7de6" stroke="#143140" strokeWidth="2" />
    </svg>
  );
}

function TeamViewer() {
  return (
    <Tile fill="#04104f">
      <circle cx="31" cy="31" r="25" fill="#fff" />
      <path d="M10 31l14-10v6.500h14V21l14 10-14 10v-6.500H24V41z" fill="#04104f" />
    </Tile>
  );
}

function EvKey() {
  return (
    <svg className="-mx-[7px] -my-[6px] h-[75px] w-[76px] shrink-0" viewBox="0 0 76 75">
      <rect x="2.500" y="2.500" width="44" height="43" rx="10" fill="#d9effa" stroke="#3f8fcf" strokeWidth="5" />
      <text x="24" y="35" textAnchor="middle" fontSize="30" fontWeight="800" fill="#2b6ca8">E</text>
      <path d="M50 3c11 2 20 10 21 22l-7-3c-2-7-7-13-14-19z" fill="#4fa6de" />
      <path d="M3 50c2 11 9 20 21 21l-3-9C13 60 7 56 3 50z" fill="#ee8a3a" />
      <rect x="29.500" y="29.500" width="43" height="43" rx="10" fill="#fbe6d3" stroke="#e66a35" strokeWidth="5" />
      <path d="M46.500 30v6a10 10 0 0 1-10 10H29" fill="none" stroke="#2b6ca8" strokeWidth="5" />
      <text x="52" y="64" textAnchor="middle" fontSize="29" fontWeight="800" fill="#df5130">V</text>
    </svg>
  );
}

function Calendar() {
  return (
    <Tile fill="#f8f7f7">
      <path d="M.5 19V14.500a14 14 0 0 1 14-14h33a14 14 0 0 1 14 14V19z" fill="#e65b4f" />
      <text x="31" y="15" textAnchor="middle" fontSize="12" fontWeight="700" fill="#fff" textLength="36" lengthAdjust="spacingAndGlyphs">
        THG 7
      </text>
      <text x="31" y="52" textAnchor="middle" fontSize="37" fontWeight="300" fill="#222" textLength="42" lengthAdjust="spacingAndGlyphs">
        24
      </text>
    </Tile>
  );
}

function Archiver() {
  return (
    <Tile fill="#fbf6ef">
      <path d="M12 9h36v26H12z" fill="#b98748" />
      <path d="M14 12h9v20h-9z" fill="#8e6330" />
      <path d="M24 6h20l7 13v18H22z" fill="#e9e7e4" />
      <path d="M44 6l7 13-9-3z" fill="#bfbcb8" />
      <path d="M11 34h40v18a2 2 0 0 1-2 2H13a2 2 0 0 1-2-2z" fill="#d8ac6a" />
      <path d="M11 34h40v4H11z" fill="#e6c18a" />
    </Tile>
  );
}

function ScreenStudio() {
  return (
    <span className="flex size-[62px] items-center justify-center rounded-[14px] bg-[conic-gradient(from_0deg,#6ee05a,#d8e04a,#f0913a,#e84a35,#e8457a,#c04fe8,#7a5fe0,#58c8c0,#6ee05a)]">
      <svg className="size-[51px]" viewBox="0 0 52 52">
        <rect width="52" height="52" rx="9" fill="#0f1026" />
        <path d="M13 0v52M26 0v52M39 0v52M0 13h52M0 26h52M0 39h52" stroke="#242744" />
        <rect x="21" y="21.500" width="9" height="9" fill="#0f1026" stroke="#fff" strokeWidth="1.800" />
      </svg>
    </span>
  );
}

function Books() {
  return (
    <Tile fill="url(#books)">
      <Grad id="books" a="#f2a23c" b="#e9782f" />
      <path d="M30 18c-4-5-16-5-19-1v29c5-3 14-3 19 1zM32 18c4-5 16-5 19-1v29c-5-3-14-3-19 1z" fill="#fff" />
    </Tile>
  );
}

function Preview() {
  return (
    <Tile fill="#f1f1ef">
      <rect x="4" y="5" width="54" height="52" rx="9" fill="#8fb4e8" />
      <path d="M4 33h54v15a9 9 0 0 1-9 9H13a9 9 0 0 1-9-9z" fill="#33507a" />
      <path d="M5 44c6-4 10 2 16-1s8 3 13 2v12H13a9 9 0 0 1-8-7z" fill="#cfd6de" />
      <path d="M8 51l10-3 6 4-5 5h-7z" fill="#7c6550" />
      <path d="M31 40h26l6 22c0 4-38 4-38 0z" fill="#c3c8cc" stroke="#76797c" strokeWidth="1.500" />
      <path d="M38 46h10l3 14H36z" fill="#eef0f1" />
      <rect x="31" y="30" width="26" height="13" rx="4" fill="#17181a" />
    </Tile>
  );
}

function TextEdit() {
  return (
    <Tile fill="#fbfbfb">
      <path d="M1 17h60M1 25h60M1 32h60M1 39h60M1 47h60M1 54h60" stroke="#b5b5b3" strokeWidth="1.500" />
      <path d="M12 1v60" stroke="#eec0bd" strokeWidth="1.200" />
      <path d="M54-7l5 2-27 62-7 9 2-11z" fill="#97aab8" stroke="#566572" strokeWidth="1.300" />
    </Tile>
  );
}

function Trash() {
  return (
    <svg className="-my-[7px] h-[74px] w-[58px] shrink-0" viewBox="0 0 58 74">
      <Grad id="trash" a="#7f8485" b="#5d6263" />
      <path d="M2 10h54l-6 56c-1 8-41 8-42 0z" fill="url(#trash)" />
      <path d="M14 30c-1 14 2 24 4 38M40 24c2 14 0 28-2 44" stroke="#a3a8a9" strokeWidth="3" strokeOpacity="0.500" fill="none" />
      <ellipse cx="29" cy="11" rx="27" ry="6" fill="#3f4445" />
      <path d="M6 12L12 4l8 5 5-8 9 5 8-4 3 7 8 3-10 5H14z" fill="#e8e9ea" />
      <path d="M14 9l7 3-5 4zM33 5l7 6-8 2z" fill="#4c7f9c" />
      <path d="M24 8l5 6-7 1z" fill="#8a3a2d" />
    </svg>
  );
}

const apps: { icon: React.ComponentType; open?: boolean; badge?: string }[] = [
  { icon: Finder, open: true },
  { icon: Launchpad },
  { icon: AppStore },
  { icon: Settings, badge: "2" },
  { icon: FaceTime },
  { icon: Word },
  { icon: Excel, open: true },
  { icon: PowerPoint },
  { icon: Terminal, open: true },
  { icon: Safari },
  { icon: Chrome, open: true },
  { icon: Edge },
  { icon: Opera, open: true },
  { icon: Messenger },
  { icon: Zalo, open: true },
  { icon: Notes },
  { icon: Dictionary },
  { icon: IMovie },
  { icon: Calculator },
  { icon: Teams },
  { icon: Zoom },
  { icon: QuickTime },
  { icon: StarUml },
  { icon: Illustrator, open: true },
  { icon: Photoshop },
  { icon: Figma, open: true },
  { icon: Xcode },
  { icon: NetBeans },
  { icon: VisualStudio },
  { icon: GearPlate },
  { icon: VsCode, open: true },
  { icon: AndroidStudio },
  { icon: TeamViewer, open: true },
  { icon: EvKey },
  { icon: Calendar },
  { icon: Archiver },
  { icon: ScreenStudio, open: true },
  { icon: Books },
];

function DockItem({ icon: Icon, open, badge }: { icon: React.ComponentType; open?: boolean; badge?: string }) {
  return (
    <span className="relative flex w-[80.4px] shrink-0 flex-col items-center">
      <span className="mt-[14px] flex h-[62px] items-center justify-center">
        <Icon />
      </span>
      {open && <i className="mt-[9px] size-[8px] rounded-full bg-white" />}
      {badge && (
        <span className="absolute left-[49px] top-[6px] flex size-[29px] items-center justify-center rounded-full bg-[#e54c3e] text-[20px] text-white">
          {badge}
        </span>
      )}
    </span>
  );
}

function Dock() {
  return (
    <footer className="absolute left-[62px] top-[2131px] z-40 flex h-[100px] w-[3461px] rounded-[32px] border-2 border-white/25 bg-[linear-gradient(to_right,#7f7786_0%,#81798a_46%,#9b90a1_52%,#a094a6_100%)] bg-clip-border pl-[4px] shadow-[0_0_0_1px_rgba(40,36,44,0.6),0_0_50px_rgba(0,0,0,0.15)]">
      {apps.map((a, i) => (
        <DockItem key={i} {...a} />
      ))}
      <i className="ml-[18px] mr-[16px] mt-[13px] h-[70px] w-[2px] bg-[#c9c1cf]" />
      <DockItem icon={Preview} />
      <DockItem icon={Zalo} />
      <DockItem icon={TextEdit} />
      <i className="ml-[19px] mr-[15px] mt-[13px] h-[70px] w-[2px] bg-[#c9c1cf]" />
      <DockItem icon={Trash} />
    </footer>
  );
}

/* ------------------------------------------------------------------ */
/* Desktop                                                             */
/* ------------------------------------------------------------------ */

export default function App() {
  return (
    <main className="relative h-[2240px] w-[3584px] overflow-hidden bg-[linear-gradient(to_right,#f3e5f8_0%,#dcd3e3_6%,#dcd3e3_94%,#f5e8fb_100%)] font-[Inter,sans-serif]">
      <EditorWindow />
      <BrowserWindow
        inactive
        tabTitle="Cart Example"
        tabTitleCls=""
        path="/PHP/CNPM/Backend/cart.php"
        urlCls="tracking-[-0.18px]"
        frame="left-[1750px] top-[50px] h-[2050px] w-[1792px] shadow-[0_0_0_1px_#000]"
      >
        <ShopPage />
        <div className="absolute inset-y-0 left-0 w-[90px] bg-[linear-gradient(to_right,rgba(0,0,0,0.28),rgba(0,0,0,0.1)_40%,transparent)] [mask-image:linear-gradient(to_bottom,transparent_0,#000_200px)]" />
        <div className="absolute inset-x-0 bottom-0 h-[70px] bg-gradient-to-b from-transparent to-black/6" />
      </BrowserWindow>
      <svg className="absolute left-[1738px] top-[141px] h-[26px] w-[11px]" viewBox="0 0 11 26" fill="none" stroke="#9a9a9e" strokeWidth="2">
        <path d="M0 1h11M0 25h11M3 1v24" />
      </svg>
      <BrowserWindow
        tabTitle="update"
        tabTitleCls="tracking-[0.26px]"
        extraTab
        path="/PHP/CNPM/Backend/display.php"
        urlCls="tracking-[-0.16px]"
        frame="left-0 top-[76px] h-[2050px] w-[1736px] shadow-[0_0_0_1px_#000,0_30px_70px_rgba(0,0,0,0.6)]"
      >
        <AdminPage />
      </BrowserWindow>
      <Dock />
      <MenuBar />
    </main>
  );
}
